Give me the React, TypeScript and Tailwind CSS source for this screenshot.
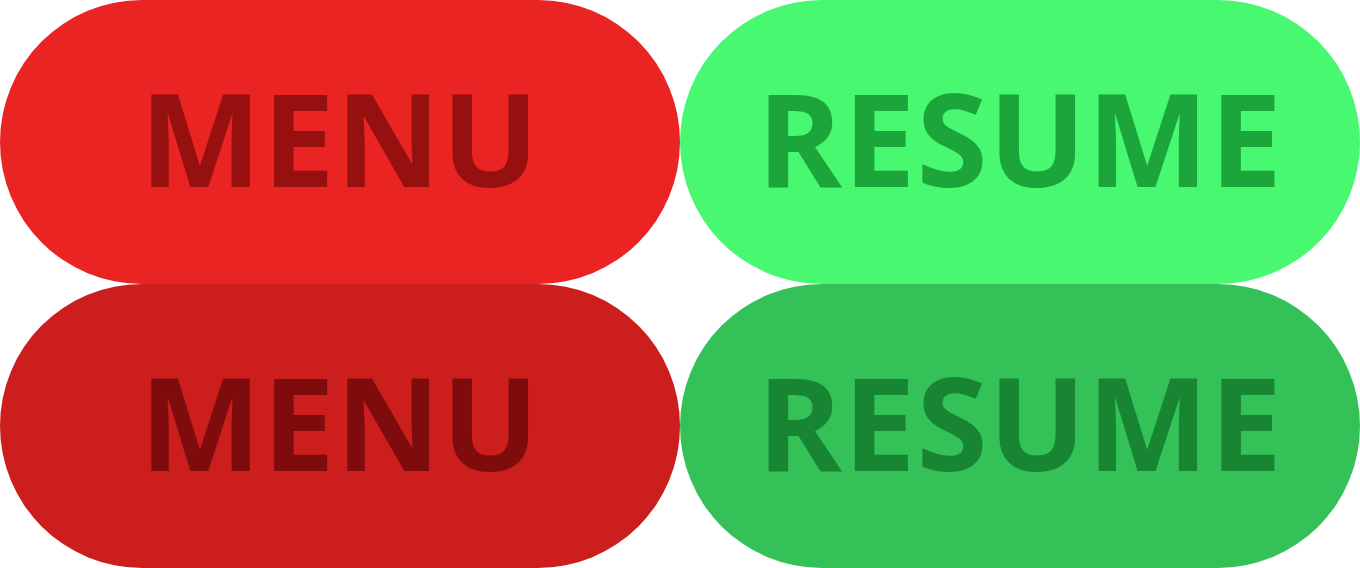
const buttons = [
  { label: 'MENU', bg: 'bg-[#ea2323]', text: 'text-[#961010]' },
  { label: 'RESUME', bg: 'bg-[#48f870]', text: 'text-[#1ca53b]' },
  { label: 'MENU', bg: 'bg-[#cd1e1e]', text: 'text-[#7f0c0c]' },
  { label: 'RESUME', bg: 'bg-[#34c258]', text: 'text-[#188532]' },
];

export default function App() {
  return (
    <div className="grid h-[568px] w-[1360px] grid-cols-2 bg-white font-['Open_Sans',sans-serif]">
      {buttons.map((b, i) => (
        <button
          key={i}
          className={`flex h-[284px] w-[680px] items-center justify-center rounded-full pb-[10px] ${b.bg}`}
        >
          <span className={`text-[129px] leading-none font-bold tracking-[1px] ${b.text}`}>
            {b.label}
          </span>
        </button>
      ))}
    </div>
  );
}
